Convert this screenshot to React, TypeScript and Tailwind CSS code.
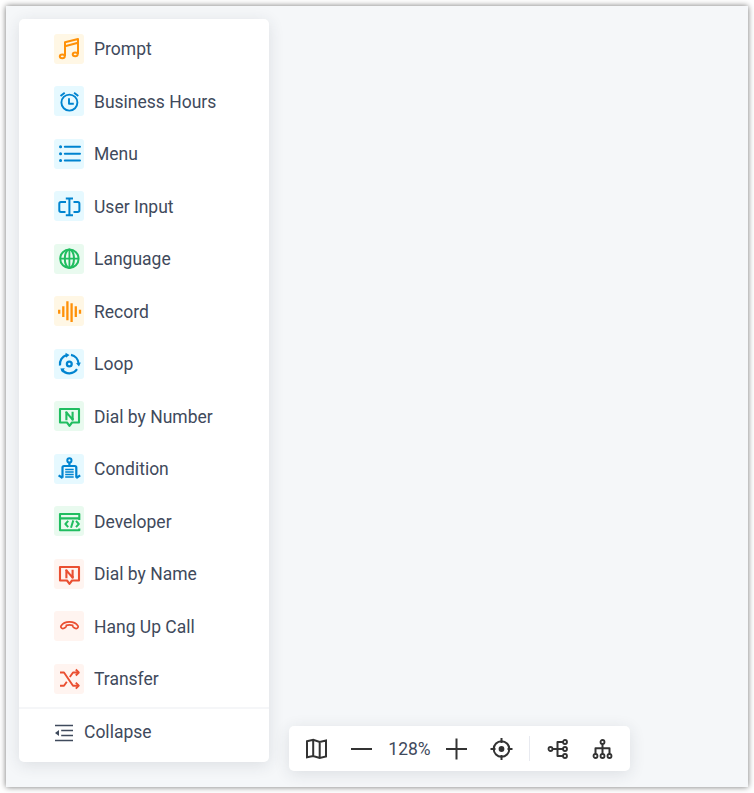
import type { ReactNode } from 'react';

type Item = { label: string; tone: string; icon: ReactNode };

const BLUE = 'bg-[#e6f9ff] text-[#0084d0]';
const ORANGE = 'bg-[#fff7e5] text-[#ff9108]';
const GREEN = 'bg-[#e9faef] text-[#20bd60]';
const RED = 'bg-[#fff4f0] text-[#ea4f31]';

const signIcon = (
  <>
    <path d="M6 8H25V21.5H18L15.5 24.8L13 21.5H6Z" strokeWidth="2.1" />
    <path d="M12.4 19.3V11.4L18.6 18.6V10.7" strokeWidth="2.1" />
    <path d="M12.4 12V10.7M18.6 19.3V17" strokeWidth="2.1" />
  </>
);

const items: Item[] = [
  {
    label: 'Prompt',
    tone: ORANGE,
    icon: (
      <>
        <path d="M11 22V8.3L24 5V20M11 12.2L24 8.8" />
        <ellipse cx="8.3" cy="22.3" rx="2.5" ry="1.9" />
        <ellipse cx="21.2" cy="20.3" rx="2.5" ry="1.9" />
      </>
    ),
  },
  {
    label: 'Business Hours',
    tone: BLUE,
    icon: (
      <g strokeWidth="1.9">
        <circle cx="15.4" cy="16.6" r="8" />
        <path d="M6.5 10L10.7 6.8M20.1 6.8L24.3 10M15 12.3V17.7H19.8" />
      </g>
    ),
  },
  {
    label: 'Menu',
    tone: BLUE,
    icon: (
      <>
        <path d="M10.8 7.8H26M10.8 14.7H26M10.8 21.5H26" strokeLinecap="round" />
        <path d="M6.5 7.8H6.6M6.5 14.7H6.6M6.5 21.5H6.6" strokeWidth="3" strokeLinecap="round" />
      </>
    ),
  },
  {
    label: 'User Input',
    tone: BLUE,
    icon: (
      <path d="M15.4 7.5V24M11.8 7.5H19M11.8 24.3H19M12 11H7Q5.3 11 5.3 12.7V19.3Q5.3 21 7 21H11.5M19.5 11H23.7Q25.4 11 25.4 12.7V19.3Q25.4 21 23.7 21H19.5" />
    ),
  },
  {
    label: 'Language',
    tone: GREEN,
    icon: (
      <g strokeWidth="2">
        <circle cx="15.4" cy="14.7" r="9.2" />
        <ellipse cx="15.4" cy="14.7" rx="4.6" ry="9.2" />
        <path d="M15.4 5.5V24M6.2 14.7H24.6" strokeWidth="1.8" />
      </g>
    ),
  },
  {
    label: 'Record',
    tone: ORANGE,
    icon: (
      <path
        d="M5.2 13.8V17.8M9.3 10.3V21M13.4 5.3V24.3M17.6 7.3V26M21.8 10.3V21M26 13.8V17.8"
        strokeWidth="2.3"
      />
    ),
  },
  {
    label: 'Loop',
    tone: BLUE,
    icon: (
      <>
        <circle cx="15.3" cy="15" r="2.4" strokeWidth="2.3" />
        <path d="M6 16.5A9.3 9.3 0 0 1 12.5 6.1M17 5.8A9.3 9.3 0 0 1 24.5 14.5M23 20.2A9.3 9.3 0 0 1 8 20.8" strokeWidth="2.2" />
        <path d="M11.5 3.8L15.5 6L12 8.8ZM22 14.2L26.8 13.6L25 17.6ZM6.3 19.5L10.8 19.2L8.2 23.5Z" fill="currentColor" stroke="none" />
      </>
    ),
  },
  { label: 'Dial by Number', tone: GREEN, icon: signIcon },
  {
    label: 'Condition',
    tone: BLUE,
    icon: (
      <>
        <circle cx="15.4" cy="6.4" r="2.1" />
        <path d="M15.4 8.5V12M8.5 23.8V13.5Q8.5 12 10 12H20.8Q22.3 12 22.3 13.5V23.8M8.6 24L4.6 21.3M22.2 24L26.2 21.3" strokeWidth="2.2" />
        <path d="M11.2 15.6H19.7M11.2 18.1H19.7M11.2 20.6H19.7M11.2 23.1H19.7" strokeWidth="1.5" />
      </>
    ),
  },
  {
    label: 'Developer',
    tone: GREEN,
    icon: (
      <>
        <path d="M25.3 14V8H6V24.3H25.3V22.5M6 12.4H25.3" strokeWidth="2.1" />
        <path d="M14.2 14.9L11.4 18L14.2 21.1M22 14.9L24.8 18L22 21.1M19.3 14.4L17 21.8" strokeWidth="2" />
      </>
    ),
  },
  { label: 'Dial by Name', tone: RED, icon: signIcon },
  {
    label: 'Hang Up Call',
    tone: RED,
    icon: (
      <path
        d="M7 15C10.5 9.6 20.5 9.6 24 15Q24.6 16 23.8 16.7L23 17.4Q22.3 17.9 21.5 17.4L19.3 16.2Q18.6 15.8 18.7 14.4Q15.5 13.2 12.3 14.4Q12.4 15.8 11.7 16.2L9.5 17.4Q8.7 17.9 8 17.4L7.2 16.7Q6.4 16 7 15Z"
        strokeWidth="1.7"
      />
    ),
  },
  {
    label: 'Transfer',
    tone: RED,
    icon: (
      <g strokeWidth="1.9">
        <path d="M6 8.5H10L19 21.7H24.5M6 21.7H10L12.8 17.7M15.8 13L19 8.5H24.5" />
        <path d="M21.8 5.5L24.8 8.5L21.8 11.5M21.8 18.7L24.8 21.7L21.8 24.7" />
      </g>
    ),
  },
];

function Glyph({ children, className = '' }: { children: ReactNode; className?: string }) {
  return (
    <svg viewBox="0 0 30 30" className={`size-[30px] shrink-0 ${className}`} fill="none" stroke="currentColor" strokeWidth="2" strokeLinejoin="round">
      {children}
    </svg>
  );
}

function Palette() {
  return (
    <aside className="flex h-[743.4px] w-[250px] shrink-0 flex-col rounded-[5px] bg-white pt-[3.5px] shadow-[0_3px_16px_rgba(40,50,65,0.12)]">
      <ul className="h-[684px]">
        {items.map((item) => (
          <li key={item.label} className="flex h-[52.5px] items-center gap-2.5 pl-[35px]">
            <span className={`flex size-[30px] rounded-[3px] ${item.tone}`}>
              <Glyph>{item.icon}</Glyph>
            </span>
            <span className="pt-px leading-6">{item.label}</span>
          </li>
        ))}
      </ul>
      <button className="flex h-[49.5px] items-center gap-2.5 border-t-2 border-[#f5f6f8] pl-[35px]">
        <svg viewBox="0 0 20 20" className="mt-[2px] h-5 w-5" fill="none" stroke="currentColor" strokeWidth="1.7">
          <path d="M1 2.5H19M7.2 7.5H19M7.2 12.5H19M1 17.5H19" />
          <path d="M1 10L5 7V13Z" fill="currentColor" stroke="none" />
        </svg>
        <span className="leading-6">Collapse</span>
      </button>
    </aside>
  );
}

function Toolbar() {
  return (
    <div className="mb-4 ml-5 flex h-[45px] w-[341px] items-center rounded-[5px] bg-white pl-3 text-[#333] shadow-[0_3px_16px_rgba(40,50,65,0.12)]">
      <Glyph>
        <path d="M6 7.2L12.2 5.8L18.7 8L25 6.5V22.5L18.7 24L12.2 22L6 23.3ZM12.2 5.8V22M18.7 8V24" strokeLinejoin="miter" />
      </Glyph>
      <Glyph className="ml-[15px]">
        <path d="M5 15H26" />
      </Glyph>
      <span className="ml-3 w-[43px] pt-0.5 text-center text-[#3f4a5c]">128%</span>
      <Glyph className="ml-[10px]">
        <path d="M5 15H26M15.5 4.5V25.5" />
      </Glyph>
      <Glyph className="ml-[15px]">
        <circle cx="15.5" cy="15" r="7.8" />
        <circle cx="15.5" cy="15" r="2.9" fill="currentColor" stroke="none" />
        <path d="M15.5 4V9M15.5 21V26M4.5 15H9.5M21.5 15H26.5" />
      </Glyph>
      <span className="ml-[13px] h-[25px] w-px bg-[#e8eaf0]" />
      <Glyph className="ml-[13px]">
        <path d="M10 15H21M22 8H14.5V22H22" />
        <g fill="white" strokeWidth="1.8">
          <circle cx="7.5" cy="15" r="2" />
          <circle cx="22" cy="8" r="2" />
          <circle cx="22" cy="15" r="2" />
          <circle cx="22" cy="22" r="2" />
        </g>
      </Glyph>
      <Glyph className="ml-[14px]">
        <path d="M15.5 9V20M8.5 21V14.2H22.5V21" />
        <g fill="white" strokeWidth="1.8">
          <circle cx="15.5" cy="8" r="2" />
          <circle cx="8.5" cy="22" r="2" />
          <circle cx="15.5" cy="22" r="2" />
          <circle cx="22.5" cy="22" r="2" />
        </g>
      </Glyph>
    </div>
  );
}

export default function App() {
  return (
    <div className="h-[793px] w-[754px] overflow-hidden bg-white p-1.5 font-['Roboto','Liberation_Sans',sans-serif] text-[17.5px] text-[#3f4a5c]">
      <main className="flex h-[781px] w-[742px] items-end bg-[#f5f7f9] shadow-[0_0_6px_rgba(0,0,0,0.55)]">
        <div className="flex h-full items-start pt-[13px] pl-[13px]">
          <Palette />
        </div>
        <Toolbar />
      </main>
    </div>
  );
}
